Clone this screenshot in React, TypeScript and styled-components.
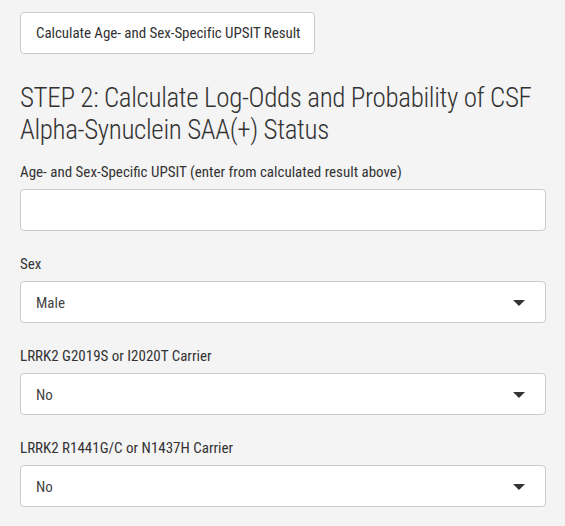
import React from "react";
import styled, { createGlobalStyle } from "styled-components";

const GlobalStyle = createGlobalStyle`
  html, body {
    margin: 0;
    padding: 0;
    background: #f4f4f4;
  }
  body {
    font-family: Roboto, "Liberation Sans", sans-serif;
    font-stretch: 75%;
    color: #333;
  }
  * { box-sizing: border-box; }
`;

const Page = styled.div`
  width: 565px;
  padding: 12px 19px 0 20px;
  display: flex;
  flex-direction: column;
  align-items: flex-start;
`;

const ActionButton = styled.button`
  height: 42px;
  padding: 0 14px 0 15px;
  background: #fff;
  border: 1px solid #cbcbcb;
  border-radius: 4px;
  font-family: Roboto, "Liberation Sans", sans-serif;
  font-stretch: 75%;
  font-weight: 400;
  font-size: 15px;
  letter-spacing: -0.05px;
  color: #333;
  cursor: pointer;
`;

const Heading = styled.h3`
  margin: 28px 0 16px;
  width: 100%;
  font-weight: 300;
  font-size: 27px;
  line-height: 32px;
  letter-spacing: -0.35px;
  color: #333;
`;

const FormGroup = styled.div`
  width: 100%;
  display: flex;
  flex-direction: column;
  margin-bottom: 23px;
`;

const Label = styled.label`
  font-size: 15px;
  line-height: 20px;
  font-weight: 400;
  color: #333;
  margin-bottom: 7px;
`;

const TextInput = styled.input`
  width: 100%;
  height: 42px;
  background: #fff;
  border: 1px solid #cbcbcb;
  border-radius: 4px;
  padding: 0 15px;
  font-family: Roboto, "Liberation Sans", sans-serif;
  font-stretch: 75%;
  font-size: 15px;
  color: #444;
  outline: none;
`;

const SelectBox = styled.div`
  width: 100%;
  height: 42px;
  background: #fff;
  border: 1px solid #cbcbcb;
  border-radius: 4px;
  padding: 1px 20px 0 15px;
  display: flex;
  align-items: center;
  justify-content: space-between;
  font-size: 15px;
  color: #444;
`;

const Caret = styled.svg`
  width: 12px;
  height: 6px;
  display: block;
`;

function Select({ label, value }: { label: string; value: string }) {
  return (
    <FormGroup>
      <Label>{label}</Label>
      <SelectBox>
        <span>{value}</span>
        <Caret viewBox="0 0 12 6">
          <path d="M0 0 L12 0 L6 6 Z" fill="#333" />
        </Caret>
      </SelectBox>
    </FormGroup>
  );
}

export default function App() {
  return (
    <>
      <GlobalStyle />
      <Page>
        <ActionButton>Calculate Age- and Sex-Specific UPSIT Result</ActionButton>
        <Heading>
          STEP 2: Calculate Log-Odds and Probability of CSF Alpha-Synuclein SAA(+) Status
        </Heading>
        <FormGroup>
          <Label>Age- and Sex-Specific UPSIT (enter from calculated result above)</Label>
          <TextInput type="text" />
        </FormGroup>
        <Select label="Sex" value="Male" />
        <Select label="LRRK2 G2019S or I2020T Carrier" value="No" />
        <Select label="LRRK2 R1441G/C or N1437H Carrier" value="No" />
      </Page>
    </>
  );
}
